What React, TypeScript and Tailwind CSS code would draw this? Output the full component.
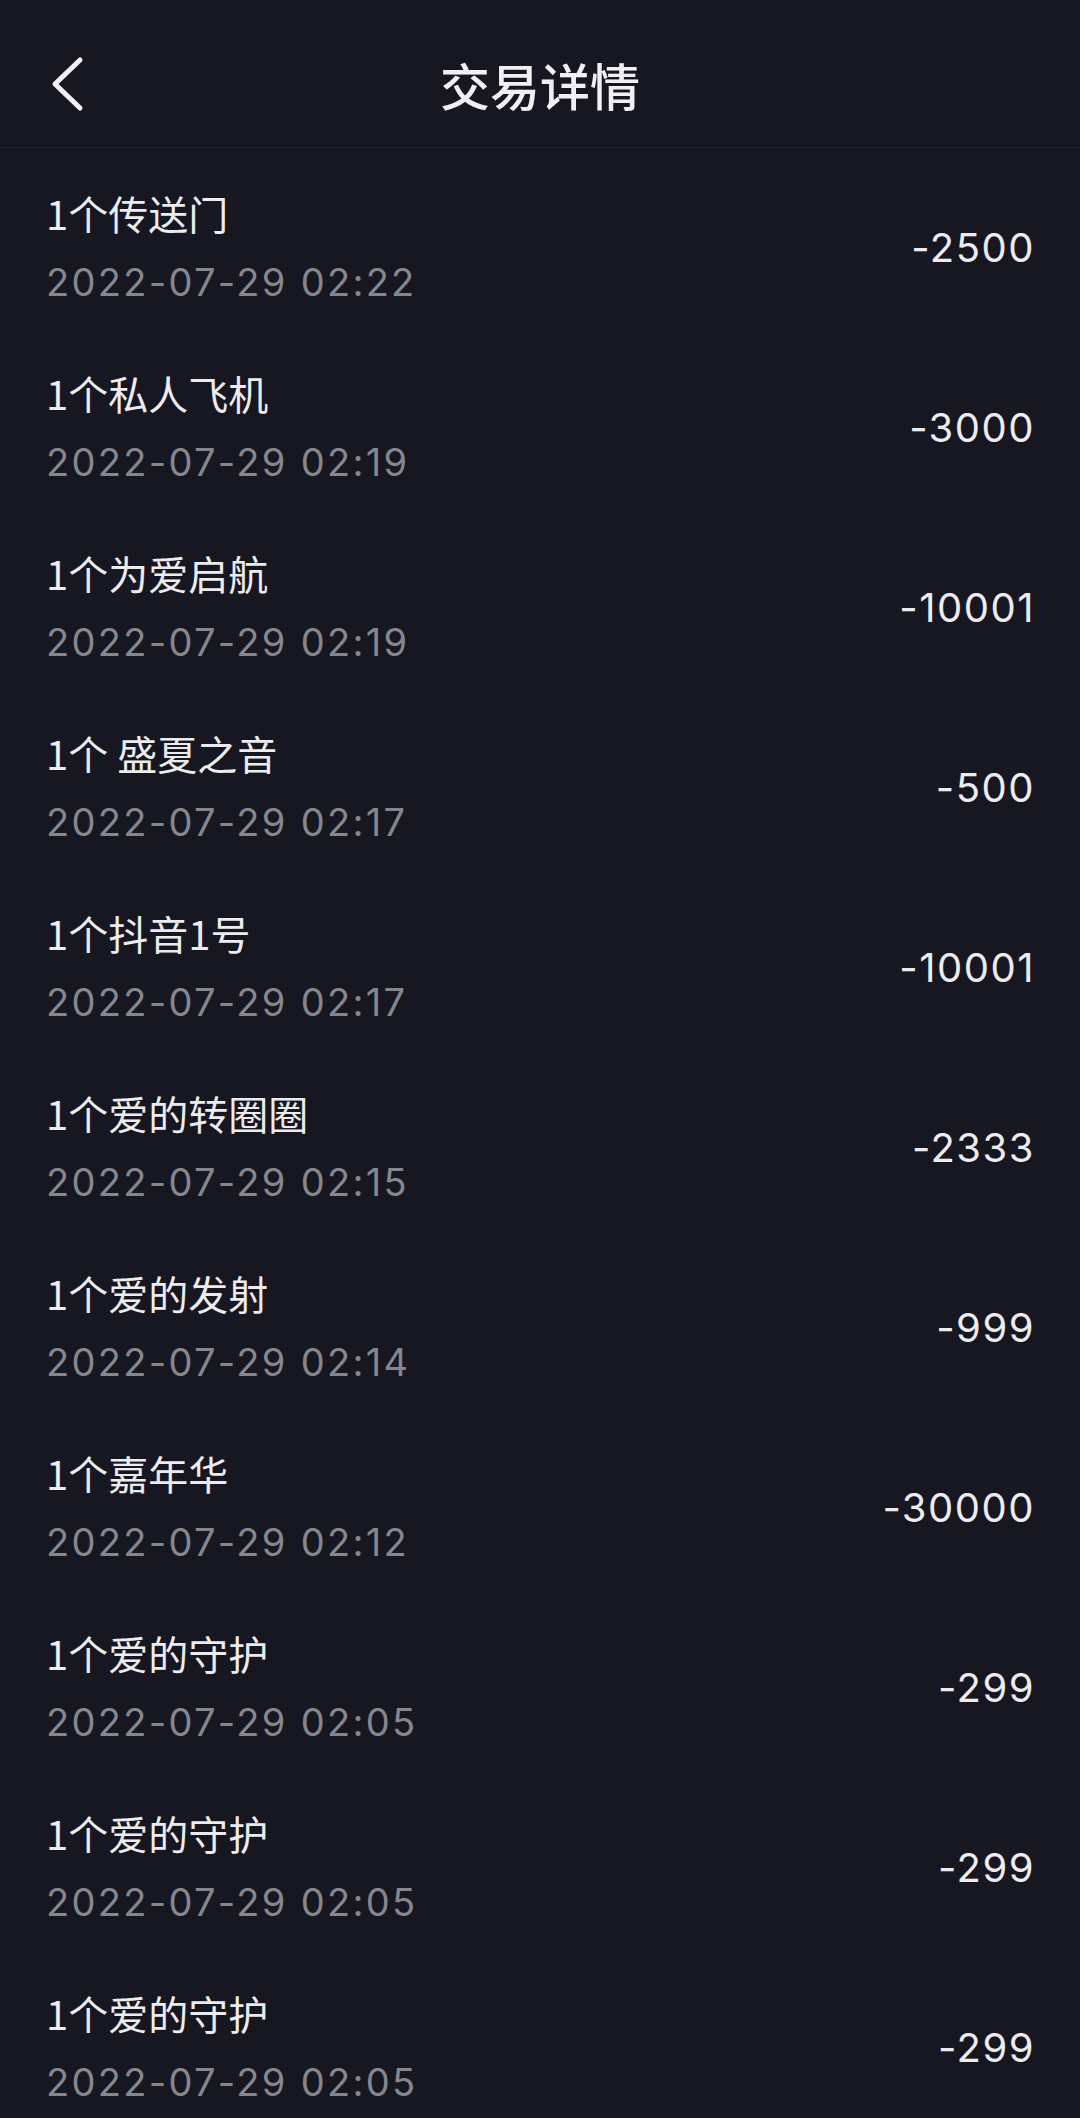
import React from "react";

const rows: { name: string; time: string; amount: string }[] = [
  { name: "1个传送门", time: "2022-07-29 02:22", amount: "-2500" },
  { name: "1个私人飞机", time: "2022-07-29 02:19", amount: "-3000" },
  { name: "1个为爱启航", time: "2022-07-29 02:19", amount: "-10001" },
  { name: "1个 盛夏之音", time: "2022-07-29 02:17", amount: "-500" },
  { name: "1个抖音1号", time: "2022-07-29 02:17", amount: "-10001" },
  { name: "1个爱的转圈圈", time: "2022-07-29 02:15", amount: "-2333" },
  { name: "1个爱的发射", time: "2022-07-29 02:14", amount: "-999" },
  { name: "1个嘉年华", time: "2022-07-29 02:12", amount: "-30000" },
  { name: "1个爱的守护", time: "2022-07-29 02:05", amount: "-299" },
  { name: "1个爱的守护", time: "2022-07-29 02:05", amount: "-299" },
  { name: "1个爱的守护", time: "2022-07-29 02:05", amount: "-299" },
];

export default function App() {
  return (
    <div className="w-[1080px] h-[2118px] overflow-hidden bg-[#161721] text-[#ececee] font-['Noto_Sans_CJK_SC',sans-serif]">
      <header className="h-[148px] border-b border-[#20212a] pt-[56px]">
        <div className="grid grid-cols-[1fr_auto_1fr] items-center h-[56px]">
          <div className="pl-[50px] flex items-center">
            <svg width="34" height="56" viewBox="0 0 34 56" fill="none">
              <path d="M30 4 L5 28 L30 52" stroke="#f2f2f4" strokeWidth="5" strokeLinecap="round" strokeLinejoin="round" />
            </svg>
          </div>
          <h1 className="text-[50px] leading-[56px] font-medium text-[#f0f0f2] font-['Noto_Sans_CJK_SC',sans-serif]">交易详情</h1>
          <div />
        </div>
      </header>
      <main>
        {rows.map((r, i) => (
          <div key={i} className="h-[180px] pt-[41px] pl-[46px] pr-[45px]">
            <div className="flex items-center justify-between">
              <div className="flex flex-col">
                <div className="text-[40px] leading-[48px] text-[#ececee] font-['Noto_Sans_CJK_SC',sans-serif] whitespace-pre">{r.name}</div>
                <div className="mt-[21px] text-[38px] leading-[48px] tracking-[2.3px] text-[#86878d] font-['Inter',sans-serif]">{r.time}</div>
              </div>
              <div className="text-[40px] leading-[48px] tracking-[1.5px] text-[#ececee] font-['Inter',sans-serif]">{r.amount}</div>
            </div>
          </div>
        ))}
      </main>
    </div>
  );
}
